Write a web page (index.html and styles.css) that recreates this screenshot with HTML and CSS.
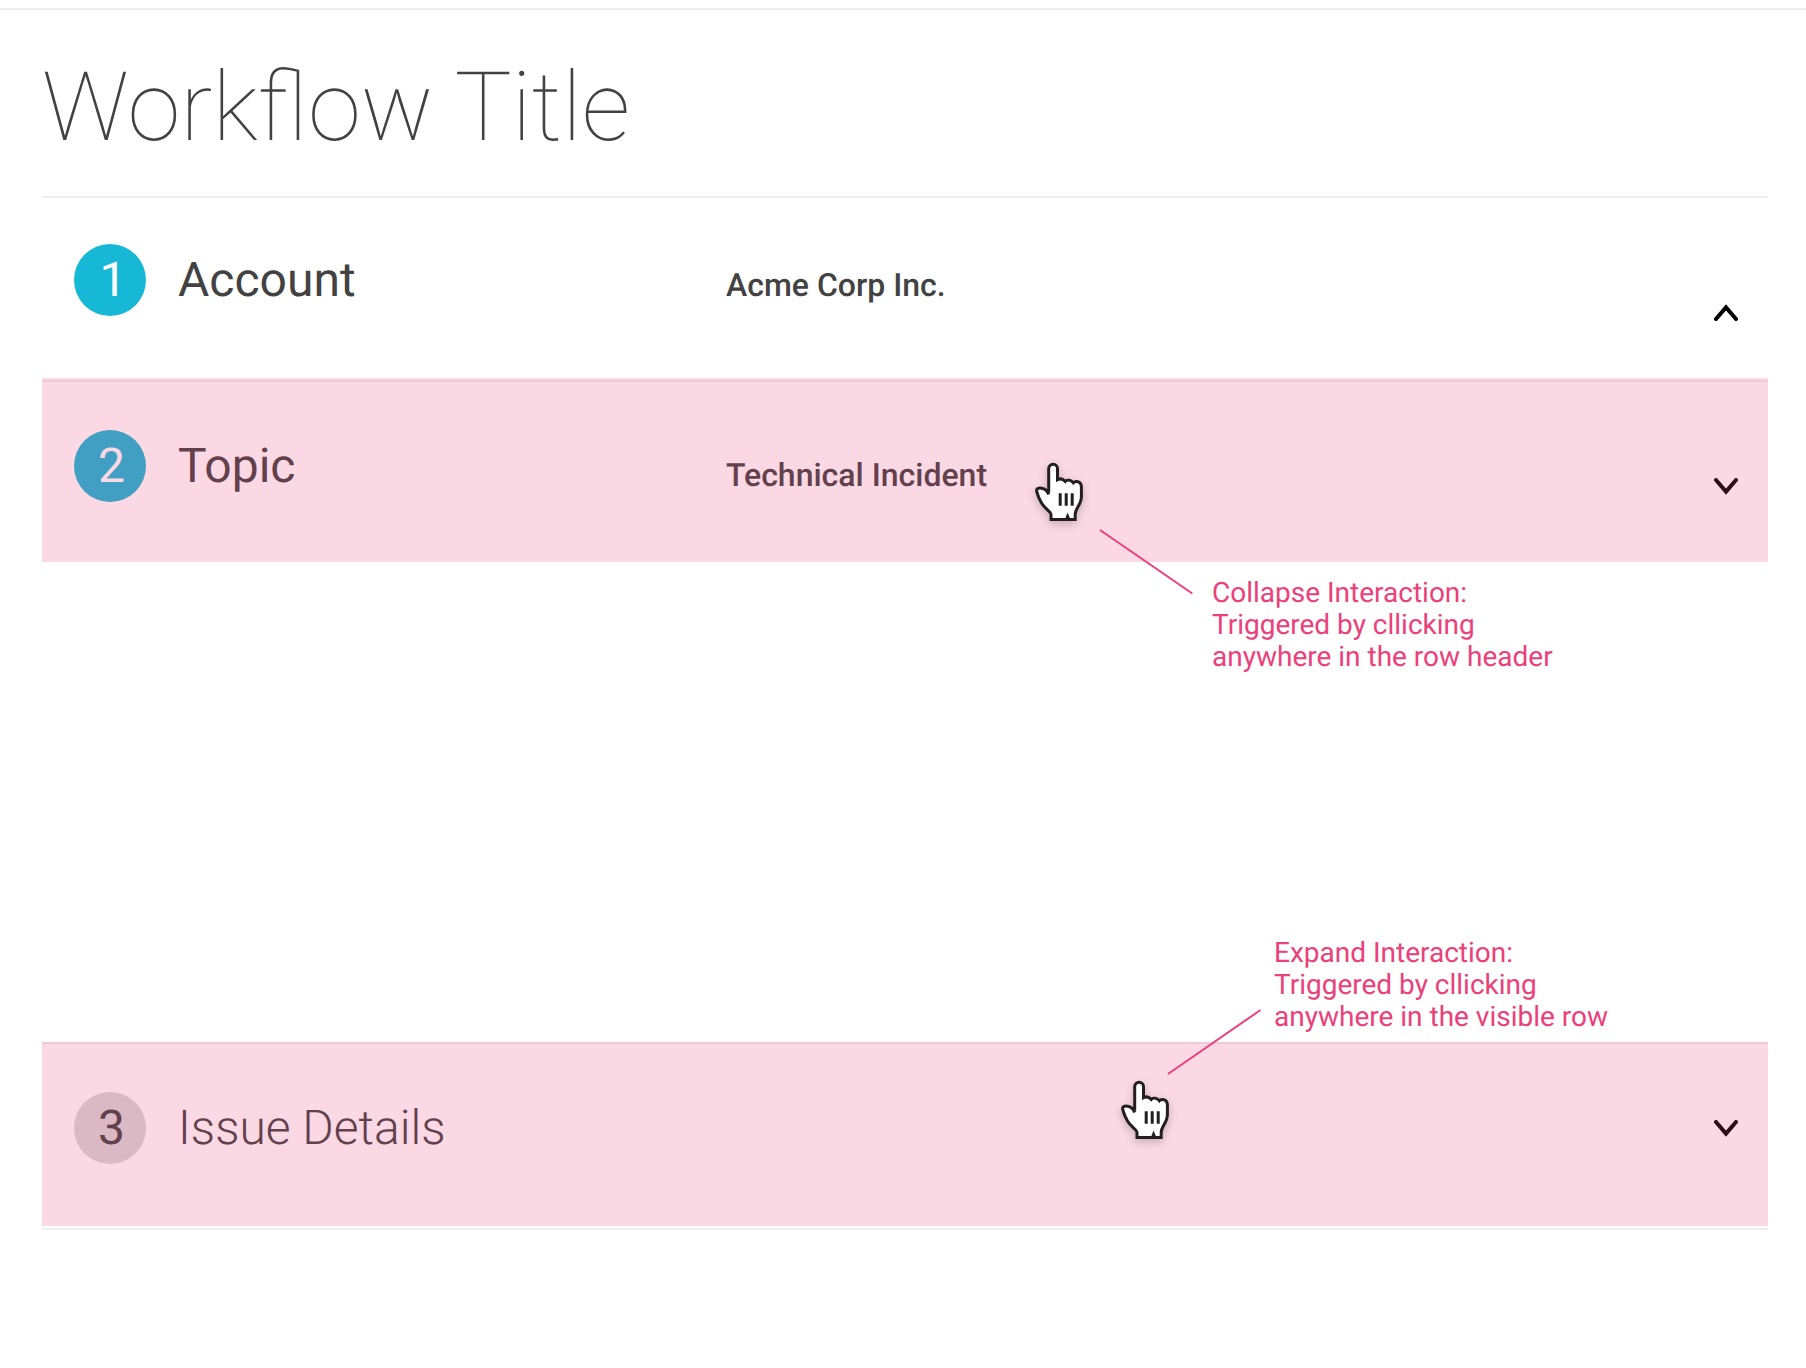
FILE: index.html
```html
<!DOCTYPE html>
<html lang="en">
<head>
<meta charset="utf-8">
<title>Workflow Title</title>
<link rel="stylesheet" href="styles.css">
</head>
<body>
<svg class="defs" width="0" height="0">
  <symbol id="hand" viewBox="0 0 80 90">
    <path class="hand-shape" d="M28.7 42.5V18.6a4.4 4.4 0 0 1 8.8 0V29.8C40 28.4 43 29 45 31.2C47.5 29.4 51 30 53.2 32.6C57.5 30.2 61.4 32.3 61.4 37V46.500C61.400 55 55.200 58 55.200 64.500V69.500H31V64.500C31 61.500 25 59 21.500 53C18.500 48 17.500 44.500 16.700 41.500C16 38.500 18.500 37.800 21.500 38.200C25 38.700 27.400 40.500 28.700 44.500"/>
    <path class="hand-lines" d="M40.200 43.300V55.700M46.200 43.300V55.700M52.200 43.300V55.700"/>
    <path class="hand-notch" d="M47.500 62.500L51 70.500H44.500ZM44 30.500L45.600 34L47 30.500ZM52.200 32L53.600 35.500L55 31.500Z"/>
  </symbol>
</svg>
<main class="page">
  <h1 class="title">Workflow Title</h1>
  <section class="row row-first">
    <span class="badge badge-first"><span>1</span></span>
    <h2 class="label">Account</h2>
    <p class="value">Acme Corp Inc.</p>
    <svg class="chevron" viewBox="0 0 24 17"><path d="M2 15L12 3.400L22 15"/></svg>
  </section>
  <section class="row row-open marked">
    <span class="badge"><span>2</span></span>
    <h2 class="label">Topic</h2>
    <p class="value">Technical Incident</p>
    <svg class="chevron" viewBox="0 0 24 17"><path d="M2 2L12 13.600L22 2"/></svg>
  </section>
  <div class="content"></div>
  <section class="row row-pending marked">
    <span class="badge badge-pending"><span>3</span></span>
    <h2 class="label label-light">Issue Details</h2>
    <p class="value"></p>
    <svg class="chevron" viewBox="0 0 24 17"><path d="M2 2L12 13.600L22 2"/></svg>
  </section>
  <hr class="end-rule">
  <svg class="leaders" viewBox="0 0 1806 1368"><path d="M1100 530L1192.300 593.500M1168 1074L1260.500 1010"/></svg>
  <svg class="cursor cursor-collapse"><use href="#hand"/></svg>
  <svg class="cursor cursor-expand"><use href="#hand"/></svg>
  <p class="note note-collapse">Collapse Interaction:<br>Triggered by cllicking<br>anywhere in the row header</p>
  <p class="note note-expand">Expand Interaction:<br>Triggered by cllicking<br>anywhere in the visible row</p>
</main>
</body>
</html>
```
FILE: styles.css
```css
* { box-sizing: border-box; }
body {
  margin: 0;
  padding-top: 8px;
  background: #fff;
  color: #424242;
  font-family: Roboto, "Liberation Sans", sans-serif;
  text-rendering: geometricPrecision;
}
.defs { position: absolute; }
.page {
  height: 1360px;
  padding: 0 38px 0 42px;
  border-top: 2px solid #eee;
}
h1, h2, p { margin: 0; }
.title {
  height: 186px;
  padding-top: 42px;
  font-size: 96px;
  font-weight: 100;
  line-height: 112px;
}
.row {
  position: relative;
  display: grid;
  grid-template-columns: 72px 516px 1fr 24px;
  column-gap: 32px;
  align-items: start;
  height: 184px;
  padding: 50px 30px 0 32px;
}
.row-first { height: 182px; padding-top: 46px; border-top: 2px solid #eee; }
.row-open { padding-top: 52px; }
.row-open::before {
  content: "";
  position: absolute;
  inset: 2px 0 auto;
  height: 2px;
  background: #eee;
}
.row-pending { padding-top: 48px; border-top: 2px solid #eee; }
.marked::after {
  content: "";
  position: absolute;
  inset: 0;
  background: #e83d76;
  opacity: .2;
}
.row-pending::after { top: -2px; }
.badge {
  display: flex;
  justify-content: center;
  height: 72px;
  padding-left: 3px;
  border-radius: 50%;
  background: #17b8d5;
  color: #fff;
  font-size: 48px;
  line-height: 72px;
}
.badge-first { padding-left: 6px; }
.badge-pending { background: #d8d8d8; color: #424242; }
.label { font-size: 48px; font-weight: 400; line-height: 72px; }
.label-light { font-weight: 300; }
.value {
  padding-top: 20px;
  font-size: 32px;
  font-weight: 500;
  line-height: 42px;
}
.row-open .value { padding-top: 24px; }
.chevron { width: 24px; height: 17px; margin-top: 60px; }
.row-open .chevron { margin-top: 48px; }
.row-pending .chevron { margin-top: 28px; }
.chevron path {
  fill: none;
  stroke: #000;
  stroke-width: 4;
  stroke-linecap: round;
}
.content { height: 480px; }
.end-rule { height: 2px; margin: 2px 0 0; border: 0; background: #eee; }
.leaders {
  position: absolute;
  left: 0;
  top: 0;
  width: 1806px;
  height: 1368px;
}
.leaders path { fill: none; stroke: #ec407a; stroke-width: 2; }
.note {
  position: absolute;
  color: #ec407a;
  font-size: 28px;
  line-height: 32px;
  white-space: nowrap;
}
.note-collapse { left: 1212px; top: 577px; }
.note-expand { left: 1274px; top: 937px; }
.cursor {
  position: absolute;
  width: 80px;
  height: 90px;
  filter: drop-shadow(0 3px 4px rgba(0, 0, 0, .2));
}
.cursor-collapse { left: 1020px; top: 450px; }
.cursor-expand { left: 1106px; top: 1068px; }
.hand-shape { fill: #fff; stroke: #231f20; stroke-width: 3; }
.hand-lines { fill: none; stroke: #231f20; stroke-width: 3; }
.hand-notch { fill: #231f20; }
```
